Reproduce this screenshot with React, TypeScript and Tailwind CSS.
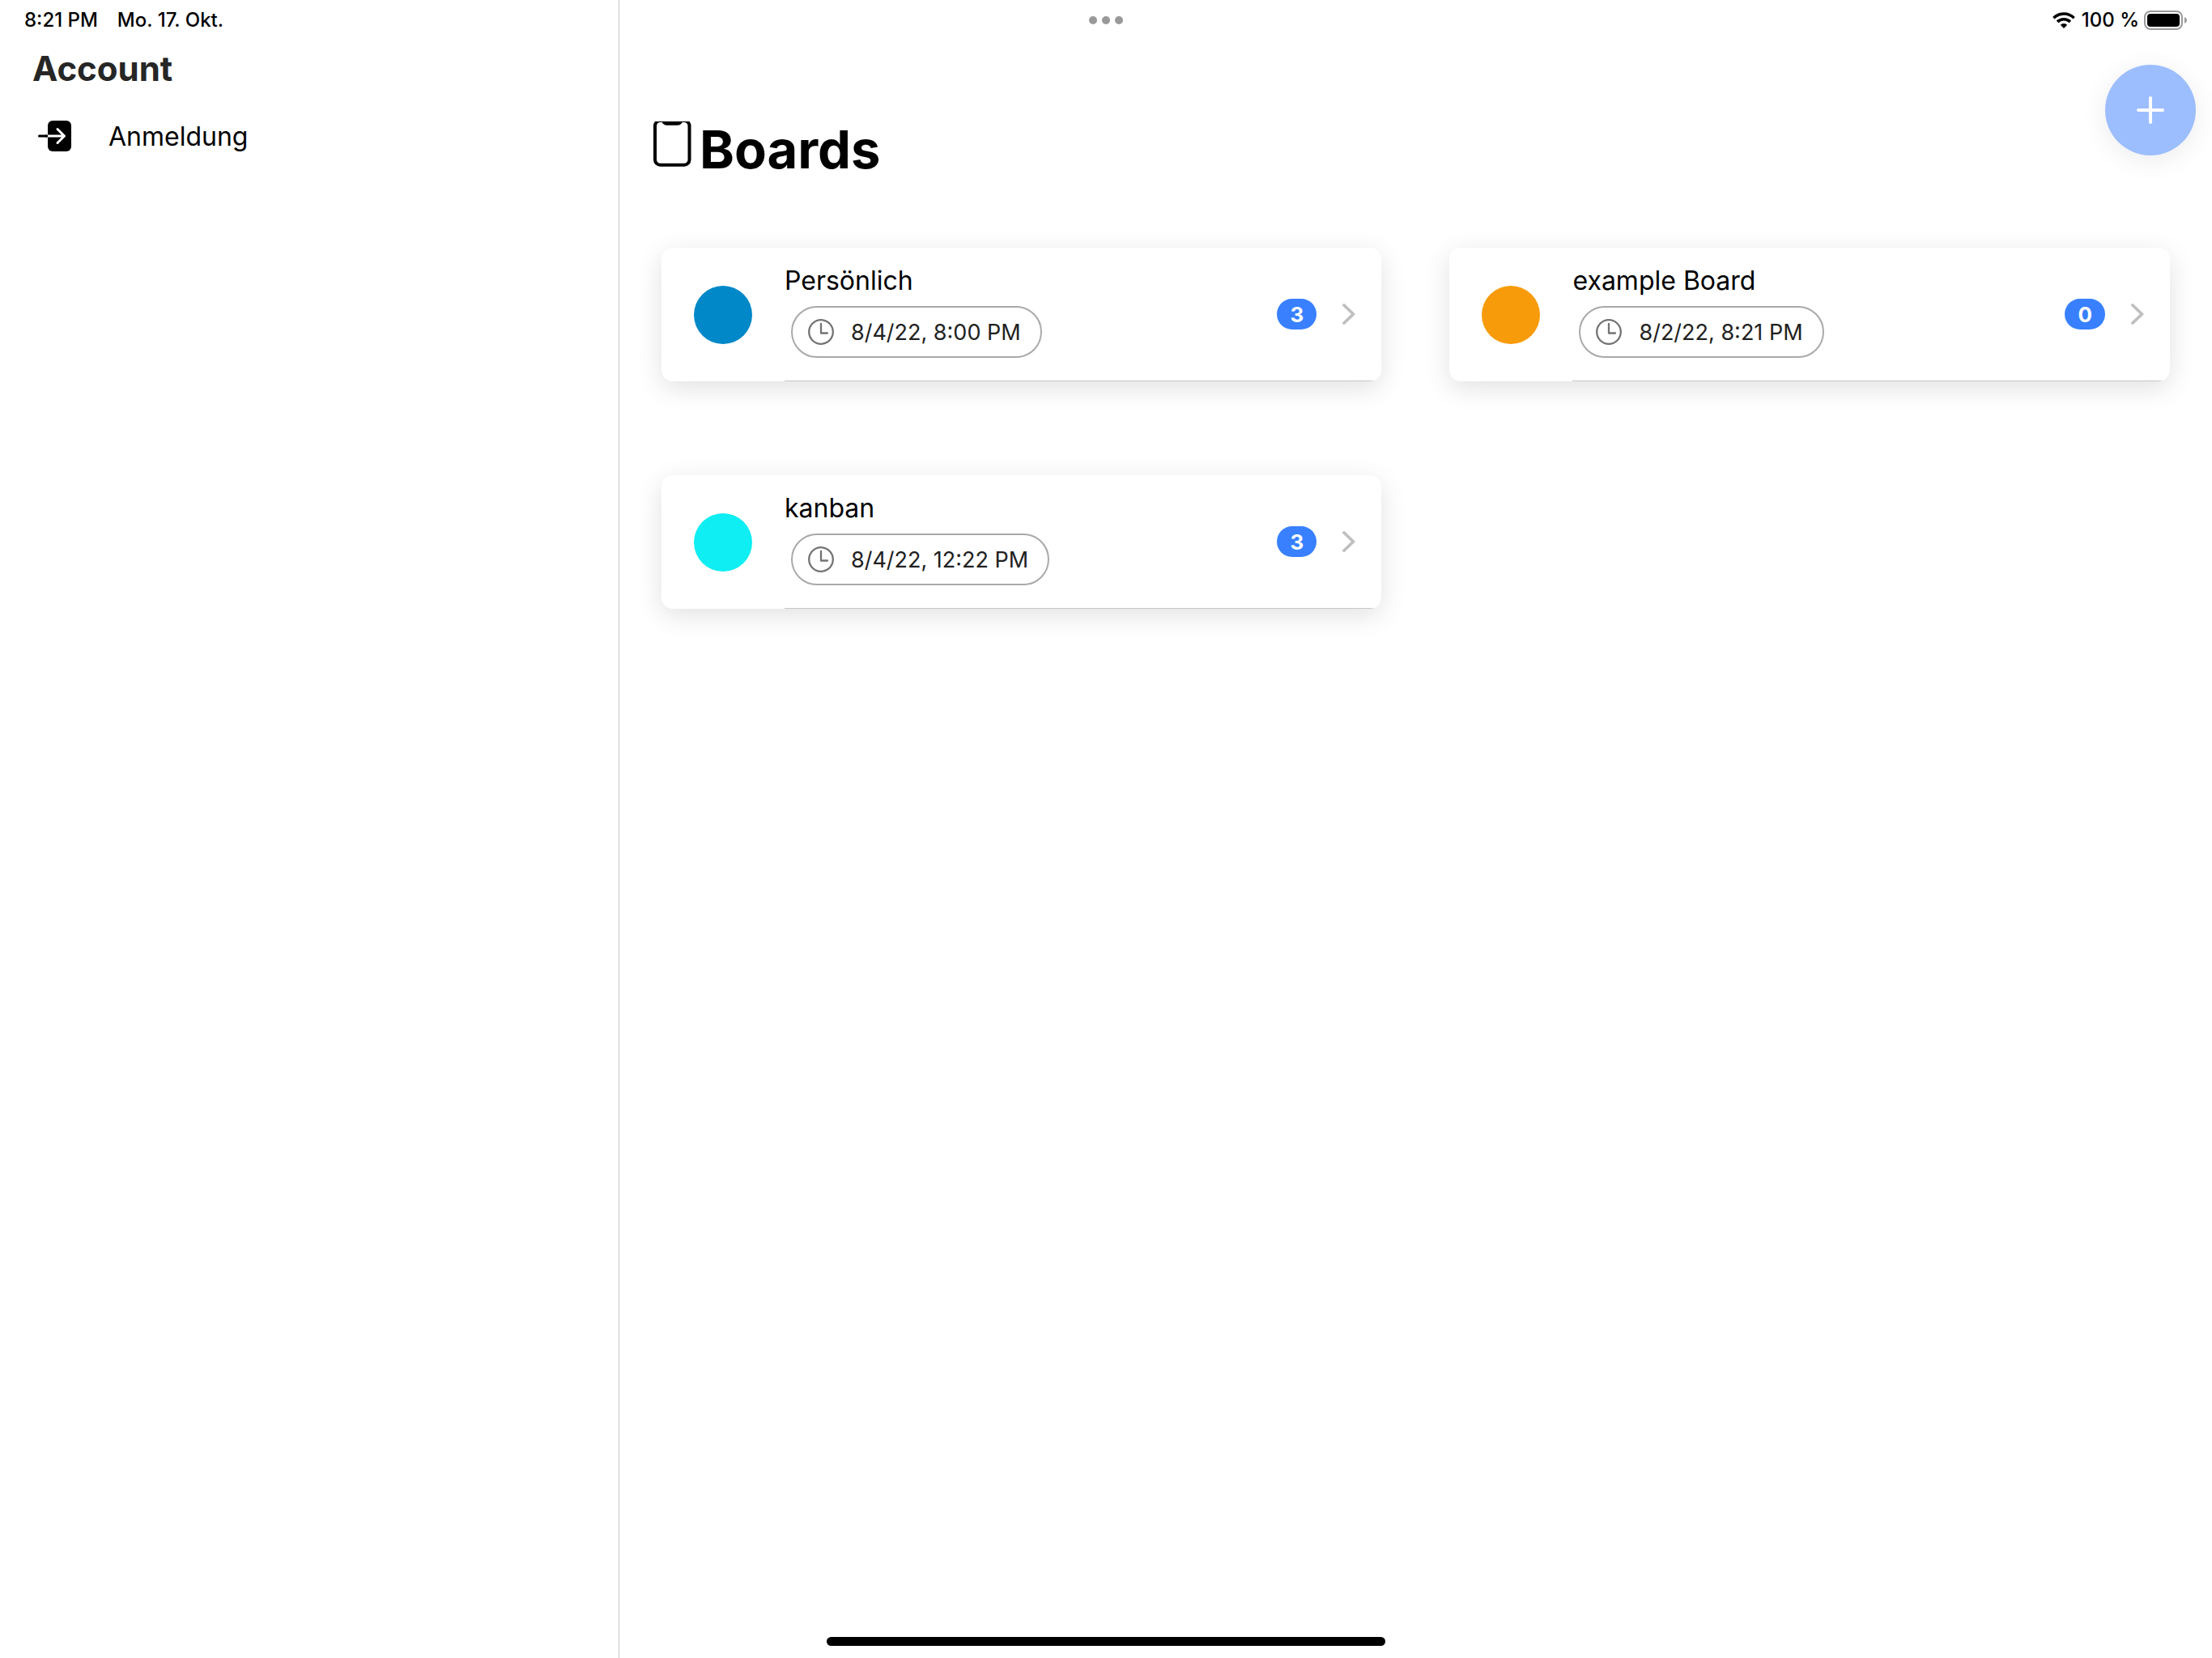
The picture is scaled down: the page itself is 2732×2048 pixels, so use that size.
type Board = { name: string; due: string; color: string; open: number };

const boards: Board[] = [
  { name: "Persönlich", due: "8/4/22, 8:00 PM", color: "bg-[#0088c8]", open: 3 },
  { name: "example Board", due: "8/2/22, 8:21 PM", color: "bg-[#f89b0a]", open: 0 },
  { name: "kanban", due: "8/4/22, 12:22 PM", color: "bg-[#0eeef3]", open: 3 },
];

function WifiIcon() {
  return (
    <svg viewBox="0 0 28 20" className="h-5 w-7" fill="none" stroke="black" strokeWidth="3.6" aria-hidden="true">
      <path d="M1.4 7.2a18 18 0 0 1 25.2 0" />
      <path d="M6.1 12a11.3 11.3 0 0 1 15.8 0" />
      <path d="M14 20l-4.2-4.3a6 6 0 0 1 8.4 0z" fill="black" stroke="none" />
    </svg>
  );
}

function BatteryIcon() {
  return (
    <svg viewBox="0 0 54 24" className="h-6 w-[54px]" aria-hidden="true">
      <rect x="1" y="1" width="46" height="22" rx="7" fill="none" stroke="#9a9a9a" strokeWidth="2" />
      <rect x="4" y="4" width="40" height="16" rx="4" fill="black" />
      <path d="M50 8c1.7.7 3 2.2 3 4s-1.3 3.3-3 4z" fill="#9a9a9a" />
    </svg>
  );
}

function LogInIcon() {
  return (
    <svg viewBox="0 0 42 38" className="h-[38px] w-[42px]" fill="none" strokeWidth="3" strokeLinecap="round" strokeLinejoin="round" aria-hidden="true">
      <rect x="12" y="0" width="29" height="38" rx="6" fill="black" />
      <path d="M12 19h20M24 10.5l8.5 8.5-8.5 8.5" stroke="white" />
      <path d="M1.5 19H10" stroke="black" />
      <path d="M9 19h3" stroke="black" strokeLinecap="butt" />
    </svg>
  );
}

function PhoneIcon() {
  return (
    <svg viewBox="0 0 49 56" className="h-14 w-[49px]" fill="none" stroke="black" strokeWidth="4" aria-hidden="true">
      <rect x="4" y="-1" width="42.5" height="54.7" rx="6.5" />
      <path d="M14.5-2v1c0 2.200 1.500 3.700 3.700 3.700h14c2.200 0 3.700-1.500 3.700-3.700v-1" />
    </svg>
  );
}

function ClockIcon() {
  return (
    <svg viewBox="0 0 32 32" className="size-8" fill="none" stroke="#737373" strokeWidth="2.3" strokeLinecap="round" strokeLinejoin="round" aria-hidden="true">
      <circle cx="16" cy="16" r="14.8" />
      <path d="M16 6v11.5h8" />
    </svg>
  );
}

function ChevronIcon() {
  return (
    <svg viewBox="0 0 16 26" className="h-[26px] w-4" fill="none" stroke="#bfbfbf" strokeWidth="3.8" strokeLinecap="round" strokeLinejoin="round" aria-hidden="true">
      <path d="M2 2l11.5 11L2 24" />
    </svg>
  );
}

function StatusBar() {
  return (
    <div className="absolute inset-x-0 top-0 z-10 grid h-[49px] grid-cols-[1fr_auto_1fr] items-center px-[30px] text-2xl leading-6 font-medium">
      <div className="flex gap-6">
        <span>8:21 PM</span>
        <span>Mo. 17. Okt.</span>
      </div>
      <div className="flex gap-1.5">
        <span className="size-2.5 rounded-full bg-[#999999]" />
        <span className="size-2.5 rounded-full bg-[#999999]" />
        <span className="size-2.5 rounded-full bg-[#999999]" />
      </div>
      <div className="flex items-center justify-end">
        <WifiIcon />
        <span className="mr-1.5 ml-2">100 %</span>
        <BatteryIcon />
      </div>
    </div>
  );
}

function Sidebar() {
  return (
    <nav className="w-[28%] shrink-0 border-r border-[#c8c8c8] pt-14">
      <h2 className="px-10 text-[42px] leading-[58px] font-bold text-[#262626]">Account</h2>
      <a href="#anmeldung" className="mt-[18px] flex h-[72px] items-center gap-[45px] pl-[47px] text-[32px] leading-10">
        <LogInIcon />
        <span className="pt-0.5">Anmeldung</span>
      </a>
    </nav>
  );
}

function BoardCard({ board }: { board: Board }) {
  return (
    <a href="#board" className="flex items-stretch overflow-hidden rounded-[14px] bg-white pl-10 shadow-[0_8px_32px_rgba(0,0,0,0.12)]">
      <span className={`mr-10 size-[72px] shrink-0 self-center rounded-full ${board.color}`} />
      <span className="flex h-[165px] grow items-center border-b border-[#c8c8c8] pr-8">
        <span className="flex grow flex-col items-start self-start pt-[21px]">
          <span className="text-[32px] leading-10">{board.name}</span>
          <span className="mt-[11px] ml-2 flex h-16 items-center gap-[21px] rounded-full border-2 border-[#a9a9a9] pr-6 pl-[19px] text-[27px] leading-8 text-[#212121]">
            <ClockIcon />
            <span className="pt-0.5">{board.due}</span>
          </span>
        </span>
        <span className="mr-8 flex h-[38px] min-w-[49px] items-center justify-center rounded-full bg-[#3880ff] px-4 text-[26px] font-bold text-white">
          {board.open}
        </span>
        <ChevronIcon />
      </span>
    </a>
  );
}

export default function App() {
  return (
    <div className="relative flex min-h-screen bg-white font-['Inter',sans-serif] text-black">
      <StatusBar />
      <Sidebar />
      <main className="grow">
        <header className="flex h-[232px] items-start justify-between pt-20 pr-5 pl-10">
          <h1 className="flex items-start gap-2.5 pt-[70px] text-[65px] leading-[70px] font-bold">
            <PhoneIcon />
            Boards
          </h1>
          <button type="button" aria-label="Neues Board" className="flex size-28 items-center justify-center rounded-full bg-[#9cbeff] shadow-[0_6px_32px_rgba(0,0,0,0.08)]">
            <svg viewBox="0 0 36 36" className="size-9" stroke="white" strokeWidth="4" strokeLinecap="round" aria-hidden="true">
              <path d="M18 3v30M3 18h30" />
            </svg>
          </button>
        </header>
        <section className="grid grid-cols-2 gap-x-[84px] gap-y-[116px] px-[52px] pt-[74px]">
          {boards.map((board) => (
            <BoardCard key={board.name} board={board} />
          ))}
        </section>
      </main>
      <div className="absolute inset-x-0 bottom-[15px] mx-auto h-[11px] w-[690px] rounded-full bg-black" />
    </div>
  );
}
